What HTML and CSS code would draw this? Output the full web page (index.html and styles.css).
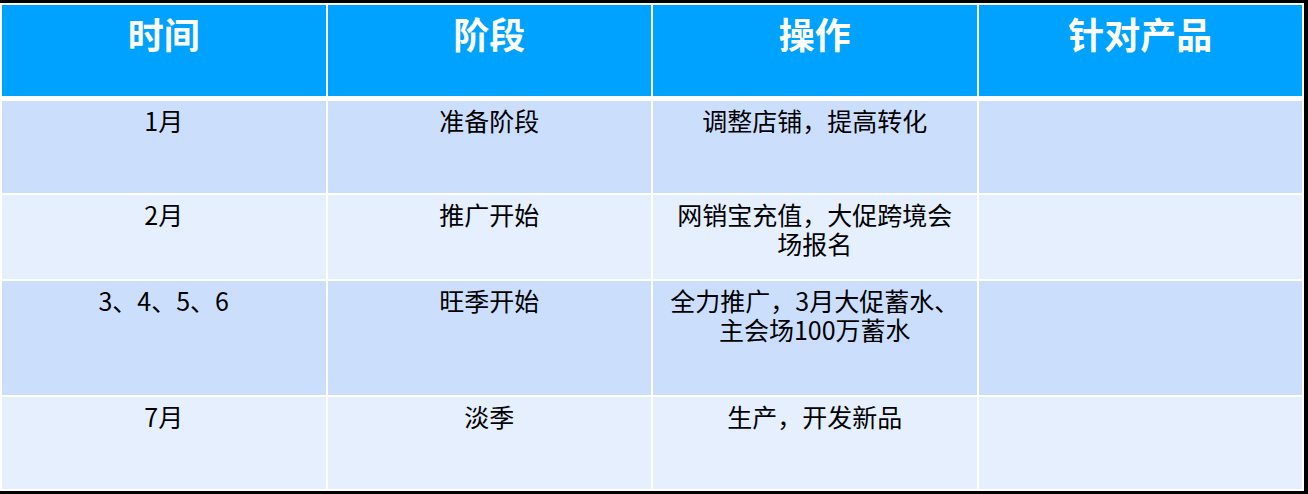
FILE: index.html
```html
<!DOCTYPE html>
<html lang="zh-CN">
<head>
<meta charset="utf-8">
<title>时间阶段表</title>
<link rel="stylesheet" href="styles.css">
</head>
<body>
<div class="sheet">
  <div class="row head">
    <div class="cell">时间</div>
    <div class="cell">阶段</div>
    <div class="cell">操作</div>
    <div class="cell">针对产品</div>
  </div>
  <div class="row odd r1">
    <div class="cell">1月</div>
    <div class="cell">准备阶段</div>
    <div class="cell">调整店铺，提高转化</div>
    <div class="cell"></div>
  </div>
  <div class="row even r2">
    <div class="cell">2月</div>
    <div class="cell">推广开始</div>
    <div class="cell">网销宝充值，大促跨境会场报名</div>
    <div class="cell"></div>
  </div>
  <div class="row odd r3">
    <div class="cell">3、4、5、6</div>
    <div class="cell">旺季开始</div>
    <div class="cell">全力推广，3月大促蓄水、主会场100万蓄水</div>
    <div class="cell"></div>
  </div>
  <div class="row even r4">
    <div class="cell">7月</div>
    <div class="cell">淡季</div>
    <div class="cell">生产，开发新品</div>
    <div class="cell"></div>
  </div>
</div>
</body>
</html>
```

FILE: styles.css
```css
html, body {
  margin: 0;
  padding: 0;
  background: #000;
  width: 1308px;
  height: 494px;
  overflow: hidden;
}

.sheet {
  margin-top: 3px;
  width: 1304px;
  height: 488px;
  box-sizing: border-box;
  padding: 2px 2px 2px 2px;
  background: #fff;
  display: flex;
  flex-direction: column;
  gap: 2px;
  font-family: "Noto Sans CJK SC", "Noto Sans", "Liberation Sans", sans-serif;
}

.row {
  display: grid;
  grid-template-columns: repeat(4, 1fr);
  column-gap: 2px;
}

.cell {
  box-sizing: border-box;
  text-align: center;
  padding: 5px 16px 0;
  font-size: 25px;
  line-height: 29px;
  color: #000;
}

.head {
  height: 91px;
  margin-bottom: 3px;
}

.head .cell {
  background: #00a2ff;
  color: #fff;
  font-weight: 700;
  font-size: 36px;
  line-height: 44px;
  padding-top: 6px;
}

.odd .cell { background: #cbdffd; }
.even .cell { background: #e5effe; }

.r1 { height: 92px; }
.r2 { height: 84px; }
.r3 { height: 114px; }
.r4 { height: 92px; }
```
